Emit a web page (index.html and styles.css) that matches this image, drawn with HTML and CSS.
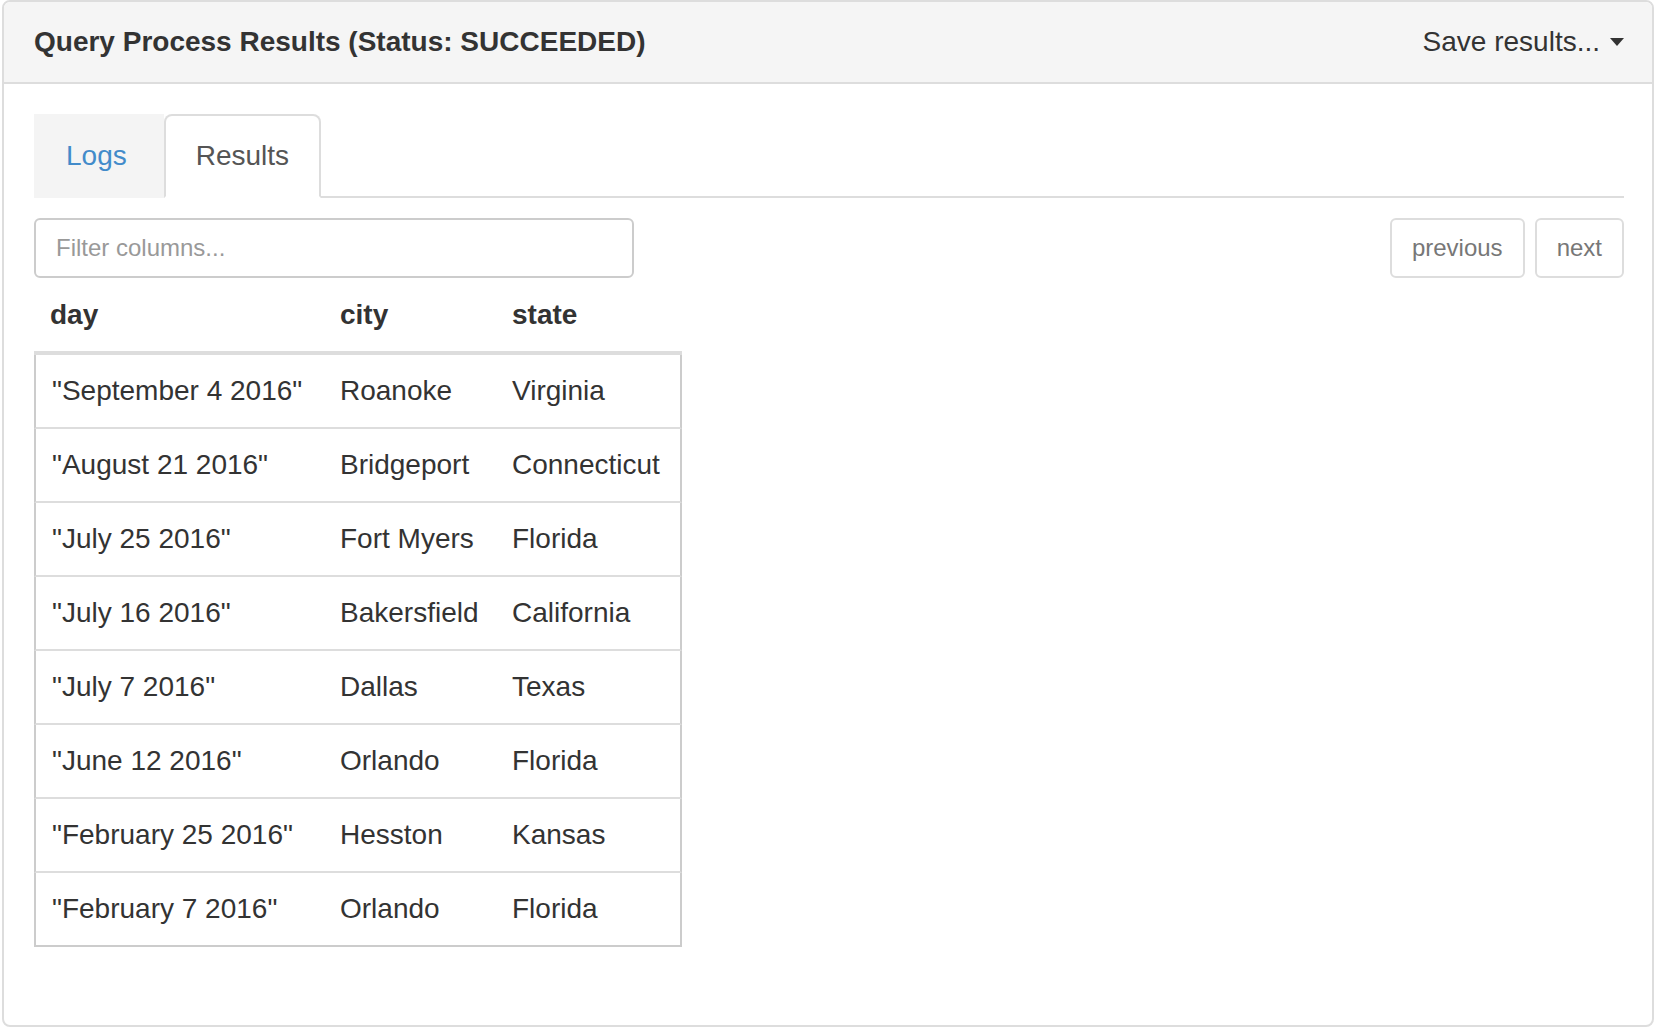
FILE: index.html
```html
<!DOCTYPE html>
<html>
<head>
<meta charset="utf-8">
<title>Query Process Results</title>
<link rel="stylesheet" href="styles.css">
</head>
<body>
<div class="panel">
  <div class="panel-heading">
    <h3 class="panel-title">Query Process Results (Status: SUCCEEDED)</h3>
    <div class="dropdown">Save results... <span class="caret"></span></div>
  </div>
  <div class="panel-body">
    <ul class="nav-tabs">
      <li class="tab tab-logs"><a>Logs</a></li>
      <li class="tab tab-active"><a>Results</a></li>
    </ul>
    <div class="toolbar">
      <input class="filter" type="text" placeholder="Filter columns...">
      <div class="pager">
        <button class="btn">previous</button>
        <button class="btn">next</button>
      </div>
    </div>
    <table class="results">
      <colgroup>
        <col class="col-day">
        <col class="col-city">
        <col class="col-state">
      </colgroup>
      <thead>
        <tr><th>day</th><th>city</th><th>state</th></tr>
      </thead>
      <tbody>
        <tr><td>"September 4 2016"</td><td>Roanoke</td><td>Virginia</td></tr>
        <tr><td>"August 21 2016"</td><td>Bridgeport</td><td>Connecticut</td></tr>
        <tr><td>"July 25 2016"</td><td>Fort Myers</td><td>Florida</td></tr>
        <tr><td>"July 16 2016"</td><td>Bakersfield</td><td>California</td></tr>
        <tr><td>"July 7 2016"</td><td>Dallas</td><td>Texas</td></tr>
        <tr><td>"June 12 2016"</td><td>Orlando</td><td>Florida</td></tr>
        <tr><td>"February 25 2016"</td><td>Hesston</td><td>Kansas</td></tr>
        <tr><td>"February 7 2016"</td><td>Orlando</td><td>Florida</td></tr>
      </tbody>
    </table>
  </div>
</div>
</body>
</html>
```

FILE: styles.css
```css
html, body {
  margin: 0;
  padding: 0;
  background: #fff;
}

body {
  font-family: "Liberation Sans", Arial, Helvetica, sans-serif;
  font-size: 28px;
  line-height: 40px;
  color: #333;
}

.panel {
  box-sizing: border-box;
  margin-left: 2px;
  height: 1027px;
  border: 2px solid #ddd;
  border-radius: 8px;
  background: #fff;
  overflow: hidden;
}

.panel-heading {
  display: flex;
  justify-content: space-between;
  align-items: center;
  padding: 20px 28px 20px 30px;
  background: #f5f5f5;
  border-bottom: 2px solid #ddd;
}

.panel-title {
  margin: 0;
  font-size: 28px;
  line-height: 40px;
  font-weight: bold;
  color: #333;
}

.dropdown {
  display: flex;
  align-items: center;
  font-size: 28px;
  line-height: 40px;
  color: #333;
}

.caret {
  display: inline-block;
  width: 0;
  height: 0;
  margin-left: 10px;
  border-top: 8px solid #333;
  border-left: 7px solid transparent;
  border-right: 7px solid transparent;
}

.panel-body {
  padding: 30px 28px 30px 30px;
}

.nav-tabs {
  display: flex;
  margin: 0;
  padding: 0;
  list-style: none;
  border-bottom: 2px solid #ddd;
}

.tab {
  margin-bottom: -2px;
}

.tab a {
  display: block;
  padding: 20px 30px;
  line-height: 40px;
  font-size: 28px;
  border: 2px solid transparent;
}

.tab-logs a {
  padding-right: 35px;
  background: #f4f4f4;
  color: #428bca;
}

.tab-active a {
  background: #fff;
  color: #555;
  border-color: #ddd #ddd transparent;
  border-radius: 8px 8px 0 0;
}

.toolbar {
  display: flex;
  justify-content: space-between;
  align-items: flex-start;
  margin-top: 20px;
}

.filter {
  box-sizing: border-box;
  width: 600px;
  height: 60px;
  padding: 10px 20px;
  font-family: inherit;
  font-size: 24px;
  line-height: 36px;
  color: #555;
  border: 2px solid #ccc;
  border-radius: 6px;
  outline: none;
  margin: 0;
}

.filter::placeholder {
  color: #999;
}

.pager {
  display: flex;
  gap: 10px;
}

.btn {
  box-sizing: border-box;
  height: 60px;
  padding: 10px 20px;
  font-family: inherit;
  font-size: 24px;
  line-height: 36px;
  color: #777;
  background: #fff;
  border: 2px solid #ddd;
  border-radius: 6px;
  margin: 0;
}

.results {
  margin-top: 1px;
  border-collapse: separate;
  border-spacing: 0;
  table-layout: fixed;
  width: 648px;
}

.col-day { width: 290px; }
.col-city { width: 172px; }
.col-state { width: 186px; }

.results th {
  text-align: left;
  font-weight: bold;
  padding: 16px;
  line-height: 40px;
  border-bottom: 4px solid #ddd;
  vertical-align: bottom;
  white-space: nowrap;
}

.results td {
  padding: 16px;
  line-height: 40px;
  border-bottom: 2px solid #ddd;
  white-space: nowrap;
}

.results td:first-child {
  border-left: 2px solid #ccc;
}

.results td:last-child {
  border-right: 2px solid #ccc;
}

.results tbody tr:last-child td {
  border-bottom-color: #ccc;
}
```
